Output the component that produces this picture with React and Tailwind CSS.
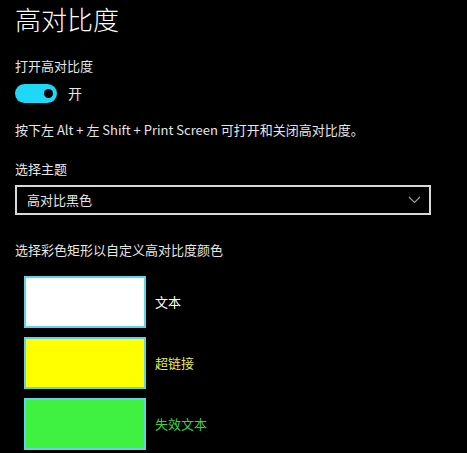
const FONT = { fontFamily: '"Noto Sans CJK SC", "Noto Sans", sans-serif' }

const SWATCHES = [
  { color: 'bg-white', label: '文本', text: 'text-white' },
  { color: 'bg-[#ffff00]', label: '超链接', text: 'text-[#e8e860]' },
  { color: 'bg-[#3ff240]', label: '失效文本', text: 'text-[#3fd23f]' },
]

export default function App() {
  return (
    <div style={FONT} className="h-[453px] w-[467px] overflow-hidden bg-black px-[15px] text-[13px] text-[#e6e6e6]">
      <h1 className="pt-[1px] text-[26px] leading-[36px] font-light text-white">高对比度</h1>

      <div className="mt-[21px] leading-[15px]">打开高对比度</div>
      <div className="mt-[10px] flex items-center gap-[11px]">
        <div className="flex h-[19px] w-[42px] items-center justify-end rounded-full bg-[#1ed8f5] pr-[4px]">
          <div className="h-[9px] w-[9px] rounded-full bg-black" />
        </div>
        <span className="text-[14px]">开</span>
      </div>

      <p className="mt-[18px] leading-[15px]">按下左 Alt + 左 Shift + Print Screen 可打开和关闭高对比度。</p>

      <div className="mt-[24px] leading-[15px]">选择主题</div>
      <div className="mt-[9px] flex h-[30px] w-[416px] items-center justify-between border-2 border-[#d9d9d9] pr-[8px] pl-[10px]">
        <span>高对比黑色</span>
        <svg width="13" height="8" viewBox="0 0 13 8" fill="none" stroke="#9a9a9a" strokeWidth="1.2">
          <path d="M1 1l5.5 5.5L12 1" />
        </svg>
      </div>

      <div className="mt-[27px] leading-[15px]">选择彩色矩形以自定义高对比度颜色</div>
      <div className="mt-[19px] flex flex-col gap-[9px] pl-[9px]">
        {SWATCHES.map((s) => (
          <div key={s.label} className="flex items-center gap-[9px]">
            <div className={`h-[52px] w-[122px] border-2 border-[#5fd4e6] ${s.color}`} />
            <span className={s.text}>{s.label}</span>
          </div>
        ))}
      </div>
    </div>
  )
}
